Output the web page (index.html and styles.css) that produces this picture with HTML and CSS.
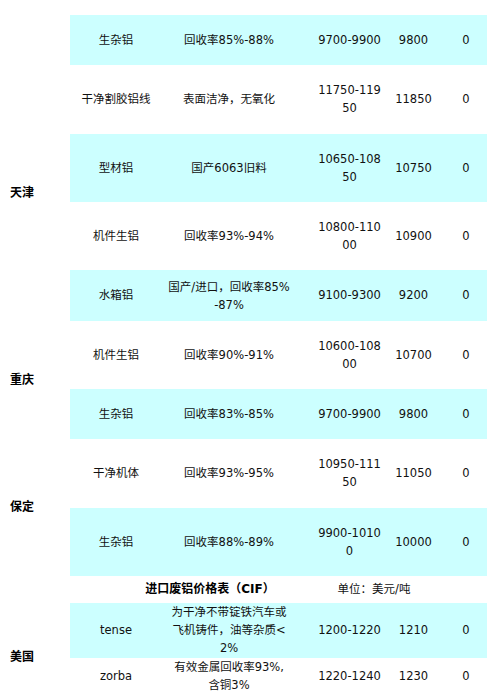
FILE: index.html
```html
<!DOCTYPE html>
<html lang="zh-CN">
<head>
<meta charset="utf-8">
<title>废铝价格表</title>
<link rel="stylesheet" href="styles.css">
</head>
<body>
<table class="price">
  <colgroup>
    <col class="c-city"><col class="c-name"><col class="c-spec"><col class="c-range"><col class="c-avg"><col class="c-chg">
  </colgroup>
  <tbody>
    <tr class="stub"><td colspan="6"></td></tr>
    <tr class="hl"><td class="city"></td><td>生杂铝</td><td class="spec">回收率85%-88%</td><td>9700-9900</td><td>9800</td><td>0</td></tr>
    <tr class="p17"><td class="city" rowspan="4">天津</td><td>干净割胶铝线</td><td class="spec">表面洁净，无氧化</td><td>11750-11950</td><td>11850</td><td>0</td></tr>
    <tr class="hl"><td>型材铝</td><td class="spec">国产6063旧料</td><td>10650-10850</td><td>10750</td><td>0</td></tr>
    <tr><td>机件生铝</td><td class="spec">回收率93%-94%</td><td>10800-11000</td><td>10900</td><td>0</td></tr>
    <tr class="hl p17"><td>水箱铝</td><td class="spec tight">国产/进口，回收率85%<br>-87%</td><td>9100-9300</td><td>9200</td><td>0</td></tr>
    <tr><td class="city" rowspan="2">重庆</td><td>机件生铝</td><td class="spec">回收率90%-91%</td><td>10600-10800</td><td>10700</td><td>0</td></tr>
    <tr class="hl"><td>生杂铝</td><td class="spec">回收率83%-85%</td><td>9700-9900</td><td>9800</td><td>0</td></tr>
    <tr class="p17"><td class="city" rowspan="2">保定</td><td>干净机体</td><td class="spec">回收率93%-95%</td><td>10950-11150</td><td>11050</td><td>0</td></tr>
    <tr class="hl"><td>生杂铝</td><td class="spec">回收率88%-89%</td><td>9900-10100</td><td>10000</td><td>0</td></tr>
    <tr class="head"><td class="city"></td><td colspan="2" class="title">进口废铝价格表（CIF）</td><td colspan="2" class="unit">单位：美元/吨</td><td></td></tr>
    <tr class="hl imp tense"><td class="city low" rowspan="2">美国</td><td>tense</td><td class="spec">为干净不带锭铁汽车或<br>飞机铸件，油等杂质&lt;<br>2%</td><td>1200-1220</td><td>1210</td><td>0</td></tr>
    <tr class="imp"><td>zorba</td><td class="spec">有效金属回收率93%,<br>含铜3%</td><td>1220-1240</td><td>1230</td><td>0</td></tr>
  </tbody>
</table>
</body>
</html>
```

FILE: styles.css
```css
html, body {
  margin: 0;
  padding: 0;
  background: #fff;
}

body {
  font-family: "DejaVu Sans", "Noto Sans CJK SC", sans-serif;
  font-size: 11.5px;
  line-height: 18px;
  color: #111;
}

.price {
  border-collapse: collapse;
  border-spacing: 0;
  table-layout: fixed;
  width: 487px;
}

.c-city { width: 70px; }
.c-name { width: 92px; }
.c-spec { width: 155px; }
.c-range { width: 65px; }
.c-avg { width: 63px; }
.c-chg { width: 42px; }

.price td {
  padding: 16px 0;
  text-align: center;
  vertical-align: middle;
  word-break: break-all;
  background: #fff;
}

.price .stub td {
  padding: 0;
  height: 15px;
}

.price .hl td {
  background: #ccffff;
}

.price td.spec {
  padding-right: 21px;
}

.price .p17 td {
  padding-bottom: 17px;
}

.price td.tight {
  padding-top: 0;
  padding-bottom: 0;
}

.price td.city {
  background: #fff;
  text-align: left;
  padding-left: 10px;
  font-size: 12px;
  font-weight: bold;
  color: #000;
}

.price .head td {
  padding: 4px 0 5px;
}

.price .head td.title {
  padding-left: 33px;
  font-size: 12px;
  font-weight: bold;
  color: #000;
}

.price .head td.unit {
  padding-right: 14px;
}

.price .imp td {
  padding-top: 0;
  padding-bottom: 0;
}

.price .tense td {
  padding-bottom: 1px;
}

.price .imp td.city.low {
  padding-top: 17px;
  padding-left: 10px;
}
```
